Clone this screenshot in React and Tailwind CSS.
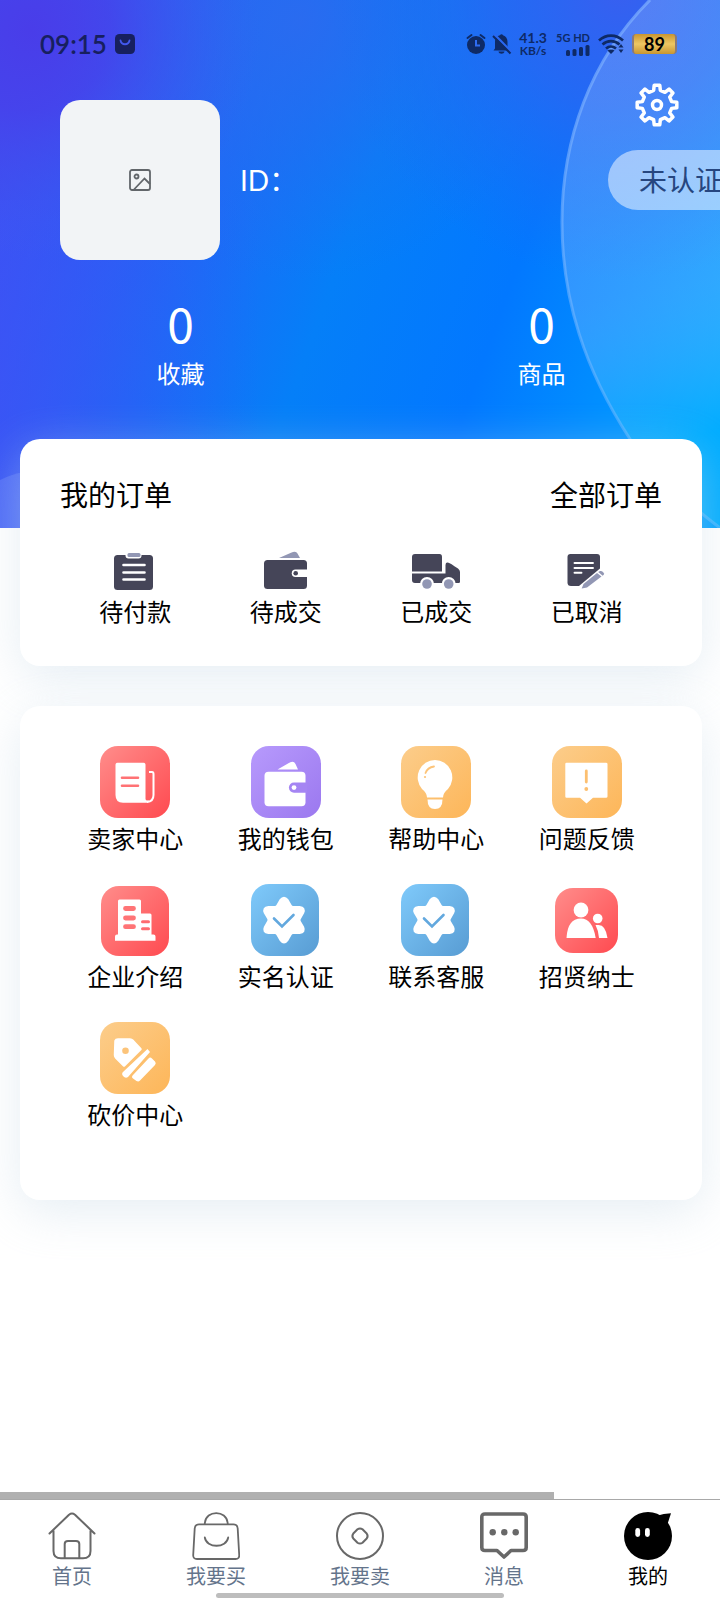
import React from "react";

const gearPath = (() => {
  const pts = [];
  for (let k = 0; k < 8; k++) {
    for (const [off, r] of [[-8, 20], [8, 20], [13, 15], [32, 15]]) {
      const a = ((k * 45 + off - 90) * Math.PI) / 180;
      pts.push(`${(22 + r * Math.cos(a)).toFixed(2)} ${(22 + r * Math.sin(a)).toFixed(2)}`);
    }
  }
  return `M${pts.join("L")}Z`;
})();

// Six-pointed badge whose tips and notches are both softened.
const starPath = (() => {
  const at = (deg, r) => {
    const a = ((deg - 90) * Math.PI) / 180;
    return `${(34 + r * Math.cos(a)).toFixed(2)} ${(36 + r * Math.sin(a)).toFixed(2)}`;
  };
  let d = `M${at(-9, 20)}`;
  for (let k = 0; k < 6; k++) {
    d += `Q${at(k * 60, 24)} ${at(k * 60 + 9, 20)}L${at(k * 60 + 24, 15.5)}Q${at(k * 60 + 30, 14.5)} ${at(k * 60 + 36, 15.5)}L${at(k * 60 + 51, 20)}`;
  }
  return `${d}Z`;
})();

function HeroBackground() {
  return (
    <svg className="absolute inset-0 h-full w-full" viewBox="0 0 720 528" preserveAspectRatio="none" aria-hidden="true">
      <defs>
        <linearGradient id="base" gradientUnits="userSpaceOnUse" x1="0" y1="120" x2="720" y2="380">
          <stop offset="0" stopColor="#3f4cf1" />
          <stop offset="0.2" stopColor="#2b5ff5" />
          <stop offset="0.48" stopColor="#057ff8" />
          <stop offset="0.7" stopColor="#0278ff" />
          <stop offset="1" stopColor="#00a2ff" />
        </linearGradient>
        <radialGradient id="violet" gradientUnits="userSpaceOnUse" cx="30" cy="30" r="230">
          <stop offset="0" stopColor="#493de9" />
          <stop offset="0.35" stopColor="#4840ea" stopOpacity="0.75" />
          <stop offset="1" stopColor="#3f5cf0" stopOpacity="0" />
        </radialGradient>
        <radialGradient id="indigo" gradientUnits="userSpaceOnUse" cx="620" cy="-10" r="290">
          <stop offset="0" stopColor="#385ff0" />
          <stop offset="0.4" stopColor="#2a66f2" stopOpacity="0.8" />
          <stop offset="1" stopColor="#1c6cf2" stopOpacity="0" />
        </radialGradient>
        <radialGradient id="soft" gradientUnits="userSpaceOnUse" cx="300" cy="20" r="260">
          <stop offset="0" stopColor="#2b6bef" stopOpacity="0.9" />
          <stop offset="1" stopColor="#2070f0" stopOpacity="0" />
        </radialGradient>
        <linearGradient id="left" x1="0" x2="1" y1="0" y2="0">
          <stop offset="0" stopColor="#3c54f6" />
          <stop offset="1" stopColor="#2a5cf6" stopOpacity="0" />
        </linearGradient>
        <linearGradient id="disc" gradientUnits="userSpaceOnUse" x1="600" y1="100" x2="690" y2="440">
          <stop offset="0" stopColor="#9cc0ff" stopOpacity="0.32" />
          <stop offset="0.55" stopColor="#94c2ff" stopOpacity="0.32" />
          <stop offset="1" stopColor="#00b4ff" stopOpacity="0.6" />
        </linearGradient>
        <linearGradient id="rim" x1="0" x2="0" y1="0" y2="1">
          <stop offset="0" stopColor="#7fb0ff" stopOpacity="0.7" />
          <stop offset="1" stopColor="#7cc0ff" stopOpacity="0.4" />
        </linearGradient>
      </defs>
      <rect width="720" height="528" fill="url(#base)" />
      <rect y="200" width="260" height="328" fill="url(#left)" opacity="0.7" />
      <rect width="720" height="528" fill="url(#soft)" />
      <rect width="720" height="528" fill="url(#indigo)" />
      <rect width="720" height="528" fill="url(#violet)" />
      <path d="M650 0C590 60 562 140 562 222C562 300 585 370 630 439C655 475 690 505 720 528V0Z" fill="url(#disc)" />
      <path d="M650 0C590 60 562 140 562 222C562 300 585 370 630 439C655 475 690 505 720 528" fill="none" stroke="url(#rim)" strokeWidth="3" />
      <path d="M0 480Q12 474 24 472V528H0Z" fill="#8fa8ff" opacity="0.25" />
    </svg>
  );
}

function StatusBar() {
  return (
    <div className="flex h-8 items-center justify-between pl-10 pr-[43px] text-[#0e2a66]">
      <div className="flex items-center gap-2">
        <span className="font-[Lato] text-[26px] font-semibold leading-8 text-[#17205f]">09:15</span>
        <svg width="20" height="20" viewBox="0 0 20 20" aria-hidden="true">
          <rect width="20" height="20" rx="4.5" fill="#17205f" />
          <path d="M5.500 6.500C6.500 11.500 13.500 11.500 14.500 6.500" fill="none" stroke="#4258ee" strokeWidth="1.800" strokeLinecap="round" />
        </svg>
      </div>
      <div className="flex items-center">
        <svg width="46" height="22" viewBox="0 0 46 22" aria-hidden="true">
          <circle cx="10" cy="12" r="9" fill="currentColor" />
          <path d="M1.500 5L5.500 2M18.500 5L14.500 2" stroke="currentColor" strokeWidth="2" strokeLinecap="round" />
          <path d="M10 7V12.500H14" fill="none" stroke="#2f6cf2" strokeWidth="2" />
          <path d="M29 15.500V9C29 5 31.500 2.800 34 2.300C34.500 1 36.500 1 37 2.300C40 3 41.500 6 41.500 9V14L43.500 17.500H27.500Z" fill="currentColor" />
          <path d="M32.500 18.500H38.500C38 21.500 33 21.500 32.500 18.500Z" fill="currentColor" />
          <path d="M28.500 1.500L45.500 19" stroke="#2a68f2" strokeWidth="2.500" />
          <path d="M27 3L44.500 20.500" stroke="currentColor" strokeWidth="2" />
        </svg>
        <div className="ml-1.5 flex w-[30px] flex-col items-center font-[Lato] font-bold">
          <span className="text-[14px] leading-[14px]">41.3</span>
          <span className="text-[12px] leading-3">KB/s</span>
        </div>
        <div className="ml-2 flex w-[34px] flex-col items-end gap-0.5">
          <span className="whitespace-nowrap font-[Lato] text-[11px] font-bold leading-[10px]">5G HD</span>
          <svg width="24" height="11" viewBox="0 0 24 11" fill="currentColor" aria-hidden="true">
            <rect y="5" width="4" height="6" rx="1.500" />
            <rect x="6.500" y="4" width="4" height="7" rx="1.500" />
            <rect x="13" y="2" width="4" height="9" rx="1.500" />
            <rect x="19.500" y="0" width="4" height="11" rx="1.500" />
          </svg>
        </div>
        <svg className="ml-2" width="26" height="20" viewBox="0 0 26 20" fill="none" stroke="currentColor" strokeWidth="2.700" aria-hidden="true">
          <path d="M1 6.500C8 0 18 0 25 6.500" />
          <path d="M4.500 10.500C9.500 6 16.500 6 21.500 10.500" />
          <path d="M8 14.500C11 12 15 12 18 14.500" />
          <path d="M13 20L9.500 16.500C11.500 15 14.500 15 16.500 16.500Z" fill="currentColor" stroke="none" />
          <path d="M23 10L25.500 13.500H20.500ZM23 19L25.500 15.500H20.500Z" fill="currentColor" stroke="none" />
        </svg>
        <div className="ml-2 flex h-5 w-[45px] items-center justify-center rounded-sm border-x-2 border-[#8b7a78] bg-linear-to-b from-[#c9962f] via-[#eec763] to-[#c9962f] font-[Lato] text-[18px] font-bold leading-5 text-black">
          89
        </div>
      </div>
    </div>
  );
}

const Clipboard = () => (
  <svg width="48" height="40" viewBox="0 0 48 40" aria-hidden="true">
    <rect x="3" y="4" width="39" height="35" rx="3.500" fill="#454558" />
    <rect x="14.500" y="0.500" width="16" height="7" rx="3" fill="#fff" />
    <rect x="16.500" y="2" width="13" height="4" rx="1.500" fill="#9297b4" />
    <path d="M12.500 14H33.500M12.500 21.500H33.500M12.500 28.500H33.500" stroke="#fff" strokeWidth="2.600" strokeLinecap="round" />
  </svg>
);
const Wallet = () => (
  <svg width="48" height="40" viewBox="0 0 48 40" aria-hidden="true">
    <path d="M17 7L29 1.800Q34 -0.500 35.500 2.500L38 7Z" fill="#9297b4" />
    <rect x="2" y="9" width="43" height="29" rx="3.500" fill="#454558" />
    <path d="M46 18.500H33.500A3.700 3.700 0 0 0 33.500 26H46Z" fill="#fff" />
    <circle cx="33.700" cy="22.200" r="2.300" fill="#454558" />
  </svg>
);
const Truck = () => (
  <svg width="48" height="40" viewBox="0 0 48 40" aria-hidden="true">
    <path d="M0 6Q0 3 3 3H27.500Q30 3 30 6V20.500H0Z" fill="#454558" />
    <path d="M0 22.500H33.500V14Q33.500 11 36.500 11.700Q38 12 46 17.500Q48 19 48 21V31Q48 32 46.500 32H3Q0 32 0 29Z" fill="#454558" />
    <circle cx="15" cy="33" r="7" fill="#fff" />
    <circle cx="36.700" cy="33" r="7" fill="#fff" />
    <circle cx="15" cy="33" r="4.800" fill="#9297b4" />
    <circle cx="36.700" cy="33" r="4.800" fill="#9297b4" />
  </svg>
);
const Note = () => (
  <svg width="48" height="40" viewBox="0 0 48 40" aria-hidden="true">
    <path d="M4.500 6Q4.500 3 7.500 3H34Q37 3 37 6V17.500L16 35H8Q4.500 35 4.500 31.500Z" fill="#454558" />
    <path d="M11.500 12H30M11.500 17H30M11.500 21.700H18.500" stroke="#fff" strokeWidth="1.900" strokeLinecap="round" />
    <path d="M18.700 37.500L20.500 33L34 22L38.500 25.500L24 36.500Z" fill="#9297b4" />
    <path d="M35.200 21L37 20Q38.500 19.500 40 21L41 22.500Q41.500 23.500 39.700 24.700Z" fill="#9297b4" />
  </svg>
);

const tones = {
  red: ["#ff8d8b", "#ff4a50"],
  purple: ["#b79afc", "#9b78ef"],
  orange: ["#fccd8b", "#fdb659"],
  blue: ["#7fcafb", "#589cd3"],
};

function Tile({ id, tone, x = 1, y = 0, w = 70, h = 72, children }) {
  return (
    <svg width="72" height="72" viewBox="0 0 72 72" aria-hidden="true">
      <defs>
        <linearGradient id={id} x1="0" y1="0" x2="1" y2="1">
          <stop offset="0" stopColor={tones[tone][0]} />
          <stop offset="1" stopColor={tones[tone][1]} />
        </linearGradient>
      </defs>
      <rect x={x} y={y} width={w} height={h} rx="18" fill={`url(#${id})`} />
      {children}
    </svg>
  );
}

const Star = ({ id }) => (
  <Tile id={id} tone="blue" w={68}>
    <path d={starPath} fill="#fff" stroke="#fff" strokeWidth="3" strokeLinejoin="round" />
    <path d="M24 34.500L32 42.500L43.500 31" fill="none" stroke="#62a8de" strokeWidth="2.600" strokeLinecap="round" />
  </Tile>
);

const orders = [
  { label: "待付款", icon: <Clipboard /> },
  { label: "待成交", icon: <Wallet /> },
  { label: "已成交", icon: <Truck /> },
  { label: "已取消", icon: <Note /> },
];

const services = [
  {
    label: "卖家中心",
    icon: (
      <Tile id="t-seller" tone="red">
        <path d="M50 26H53Q54.500 26 54.500 28V49Q54.500 55.500 48 56" fill="none" stroke="#fff" strokeWidth="2" />
        <path d="M16.500 18.500Q16.500 16.700 18.500 16.700H44.500Q46.500 16.700 46.500 18.500V53Q46.500 55 50 54.500L49 56.700H24Q16.500 56.700 16.500 49Z" fill="#fff" />
        <path d="M23 31.700H39M23 39.700H39" stroke="#ff7274" strokeWidth="2.600" strokeLinecap="round" />
      </Tile>
    ),
  },
  {
    label: "我的钱包",
    icon: (
      <Tile id="t-wallet" tone="purple">
        <path d="M27.500 23.500L38 17.500Q43.500 14 45.500 18L48 23.500Z" fill="#fff" />
        <rect x="14.500" y="25.700" width="41" height="34.500" rx="4" fill="#fff" />
        <path d="M57 36.500H44A5.100 5.100 0 0 0 44 46.700H57Z" fill="#a585f3" />
        <circle cx="44" cy="41.600" r="2.400" fill="#fff" />
      </Tile>
    ),
  },
  {
    label: "帮助中心",
    icon: (
      <Tile id="t-help" tone="orange">
        <path d="M35 14A17.500 17.500 0 0 0 22 43Q27 47 27 51.500H43Q43 47 48 43A17.500 17.500 0 0 0 35 14Z" fill="#fff" />
        <path d="M27.500 53.500H42.500Q42.500 63 35 63Q27.500 63 27.500 53.500Z" fill="#fff" />
        <path d="M25.500 27Q27.500 21.500 34 20.500" fill="none" stroke="#fcc47a" strokeWidth="1.800" strokeLinecap="round" />
        <circle cx="25" cy="31" r="1.100" fill="#fcc47a" />
      </Tile>
    ),
  },
  {
    label: "问题反馈",
    icon: (
      <Tile id="t-feedback" tone="orange">
        <path d="M15.500 16.700H55Q56.500 16.700 56.500 18V50.500Q56.500 51.700 55 51.700H42L35.500 57.500L29 51.700H15.500Q14.300 51.700 14.300 50.500V18Q14.300 16.700 15.500 16.700Z" fill="#fff" />
        <path d="M35.300 25V36" stroke="#fcbf70" strokeWidth="2.800" strokeLinecap="round" />
        <circle cx="35.300" cy="43" r="1.900" fill="#fcbf70" />
      </Tile>
    ),
  },
  {
    label: "企业介绍",
    icon: (
      <Tile id="t-company" tone="red" x={2} y={2} w={68} h={70}>
        <path d="M19 17Q19 15.500 20.500 15.500H40.500Q42 15.500 42 17V29.500H51Q52.500 29.500 52.500 31V50.500H54.500Q56.500 50.500 56.500 52.500V56.700H16V52.500Q16 50.500 18 50.500H19Z" fill="#fff" />
        <path d="M26.500 24.500H34.500M26.500 34H34.500M26.500 42.700H34.500" stroke="#ff7476" strokeWidth="4.800" strokeLinecap="round" />
        <path d="M43.500 37.800H49.500M43.500 44.700H49.500" stroke="#ff6c6f" strokeWidth="3" strokeLinecap="round" />
      </Tile>
    ),
  },
  { label: "实名认证", icon: <Star id="t-verify" /> },
  { label: "联系客服", icon: <Star id="t-support" /> },
  {
    label: "招贤纳士",
    icon: (
      <Tile id="t-hire" tone="red" x={4} y={4} w={63} h={65}>
        <circle cx="30" cy="26" r="7.400" fill="#fff" />
        <path d="M15.500 54Q16.500 34.500 30 34.500Q41.500 34.500 44.700 54Z" fill="#fff" />
        <circle cx="46.700" cy="34.500" r="4.800" fill="#fff" />
        <path d="M46.500 41Q54.500 40 56.500 54H48Q47.500 46.500 44.500 41Z" fill="#fff" />
      </Tile>
    ),
  },
  {
    label: "砍价中心",
    icon: (
      <Tile id="t-bargain" tone="orange">
        <path d="M16.500 19Q17 17.500 19 17.500H31Q32.500 17.500 34 19L41.500 27L25 43.500L17 35.500Q16 34.500 16 33Z" fill="#fff" stroke="#fff" strokeWidth="2.500" strokeLinejoin="round" />
        <circle cx="26.500" cy="28.700" r="3.300" fill="#fcc47a" />
        <path d="M48.500 27L51 30L29 55Q26.500 57 24 54Q22 51.500 24.500 49.500Z" fill="#fff" />
        <path d="M49.500 36.500Q51 34.500 53 36.500L56 39.500Q57.500 41 56 43L41 58.500Q39.500 60 37.500 59L34 56.500Q32 55 34 53Z" fill="#fff" />
      </Tile>
    ),
  },
];

const line = { fill: "none", stroke: "#686868", strokeWidth: 2, strokeLinecap: "round", strokeLinejoin: "round" };

const tabs = [
  {
    label: "首页",
    icon: (
      <g {...line}>
        <path d="M1.500 21.500L21 2.700Q24 0.500 27 2.700L46.500 21.500M5.500 19V39Q5.500 46.300 13 46.300H35Q42.500 46.300 42.500 39V19" />
        <path d="M16.700 46V32Q16.700 29 20 29H28Q31.300 29 31.300 32V46" />
      </g>
    ),
  },
  {
    label: "我要买",
    icon: (
      <g {...line} strokeWidth="1.800">
        <path d="M7 12.300H41.500Q45.500 12.300 45.700 16.500L47.200 43Q47.500 47 43.500 47H5Q1 47 1.200 43L2.700 16.500Q3 12.300 7 12.300Z" />
        <path d="M12.800 12V11C14 -2.300 34.500 -2.300 35.700 11V12M12.800 25.500C14.500 36.500 34.500 36.500 36.200 25.500" />
      </g>
    ),
  },
  {
    label: "我要卖",
    icon: (
      <g {...line}>
        <circle cx="24" cy="24" r="23" />
        <path d="M21.500 17.300Q24 15.500 26.500 17.300L30.700 21.500Q32.500 24 30.700 26.500L26.500 30.700Q24 32.500 21.500 30.700L17.300 26.500Q15.500 24 17.300 21.500Z" />
      </g>
    ),
  },
  {
    label: "消息",
    icon: (
      <g>
        <path d="M5 2H43Q46.200 2 46.200 5V35.500Q46.200 38.500 43 38.500H31L24 45L17 38.500H5Q1.800 38.500 1.800 35.500V5Q1.800 2 5 2Z" {...line} strokeWidth="3.600" />
        <g fill="#686868">
          <circle cx="12.700" cy="20.300" r="3.200" />
          <circle cx="24.300" cy="20.300" r="3.200" />
          <circle cx="35.700" cy="20.300" r="3.200" />
        </g>
      </g>
    ),
  },
  {
    label: "我的",
    active: true,
    icon: (
      <g>
        <circle cx="24" cy="24" r="24" fill="#000" />
        <path d="M32 4Q40 1.500 47 1.200L43.500 12L38 14Z" fill="#000" />
        <rect x="11.300" y="16" width="4.800" height="9" rx="2.400" fill="#fff" />
        <rect x="21" y="16" width="4.800" height="9" rx="2.400" fill="#fff" />
      </g>
    ),
  },
];

const cardClass = "relative ml-5 mr-[18px] rounded-[20px] bg-white px-10 shadow-[0_12px_48px_rgba(200,218,230,0.45)]";

export default function App() {
  return (
    <div className="flex min-h-screen flex-col bg-white font-['Lato','Noto_Sans_CJK_SC',sans-serif] text-black">
      <header className="relative overflow-hidden pb-[134px] text-white">
        <HeroBackground />
        <div className="relative">
          <div className="pt-7">
            <StatusBar />
          </div>
          <div className="flex items-start pl-[60px] pt-5">
            <div className="mt-5 flex size-40 shrink-0 items-center justify-center rounded-[20px] bg-[#f2f4f6]">
              <svg width="22" height="22" viewBox="0 0 22 22" fill="none" stroke="#62666a" strokeWidth="1.800" role="img" aria-label="头像">
                <rect x="1" y="1" width="20" height="20" rx="2" />
                <circle cx="7.500" cy="7.500" r="2" />
                <path d="M4.500 21L15.500 9.500L21 15" />
              </svg>
            </div>
            <div className="ml-5 mt-20 flex-1 text-[28px] leading-10">ID：</div>
            <div className="w-28 shrink-0">
              <button type="button" aria-label="设置" className="ml-[27px] mt-[3px] block size-11">
                <svg width="44" height="44" viewBox="0 0 44 44" fill="none" stroke="#fff" strokeWidth="3.500" strokeLinejoin="round" aria-hidden="true">
                  <path d={gearPath} />
                  <circle cx="22" cy="22" r="4.500" />
                </svg>
              </button>
              <button type="button" className="mt-[23px] block h-[60px] w-[148px] rounded-full bg-white/50 pl-[31px] text-left text-[28px] leading-[58px] text-[#26467f]">
                未认证
              </button>
            </div>
          </div>
          <div className="-mr-0.5 grid grid-cols-2 pt-[34px] text-center">
            {["收藏", "商品"].map((label) => (
              <div key={label}>
                <div className="font-['Noto_Sans_CJK_SC',sans-serif] text-[48px] leading-[56px]">0</div>
                <div className="mt-1 text-[24px] leading-10">{label}</div>
              </div>
            ))}
          </div>
        </div>
      </header>

      <main className="flex-1">
        <section className={`${cardClass} -mt-[89px] pb-[37px] pt-9`}>
          <div className="flex items-center justify-between text-[28px] leading-10">
            <h2>我的订单</h2>
            <a href="#orders">全部订单</a>
          </div>
          <div className="mt-9 grid grid-cols-4">
            {orders.map((o) => (
              <a key={o.label} href="#orders" className="flex flex-col items-center gap-1">
                {o.icon}
                <span className="text-[24px] leading-[34px]">{o.label}</span>
              </a>
            ))}
          </div>
        </section>

        <section className={`${cardClass} mt-10 grid grid-cols-4 gap-y-7 pb-[68px] pt-10`}>
          {services.map((s) => (
            <a key={s.label} href="#service" className="flex flex-col items-center gap-1">
              {s.icon}
              <span className="whitespace-nowrap text-[24px] leading-[34px]">{s.label}</span>
            </a>
          ))}
        </section>
      </main>

      <footer className="sticky bottom-0">
        <div className="h-[7px] w-[77%] bg-[#b0b0b0]" />
        <div className="border-t border-[#a8a8a8] bg-white pb-0.5 pt-3">
          <nav className="grid grid-cols-5">
            {tabs.map((t) => (
              <a key={t.label} href="#tab" aria-current={t.active ? "page" : undefined} className="flex flex-col items-center gap-[3px]">
                <svg width="48" height="48" viewBox="0 0 48 48" aria-hidden="true">
                  {t.icon}
                </svg>
                <span className={t.active ? "text-[20px] leading-[26px] text-black" : "text-[20px] leading-[26px] text-[#64748b]"}>{t.label}</span>
              </a>
            ))}
          </nav>
          <div className="mx-auto mt-1 h-[5px] w-2/5 rounded-full bg-[#bdbdbd]" />
        </div>
      </footer>
    </div>
  );
}
